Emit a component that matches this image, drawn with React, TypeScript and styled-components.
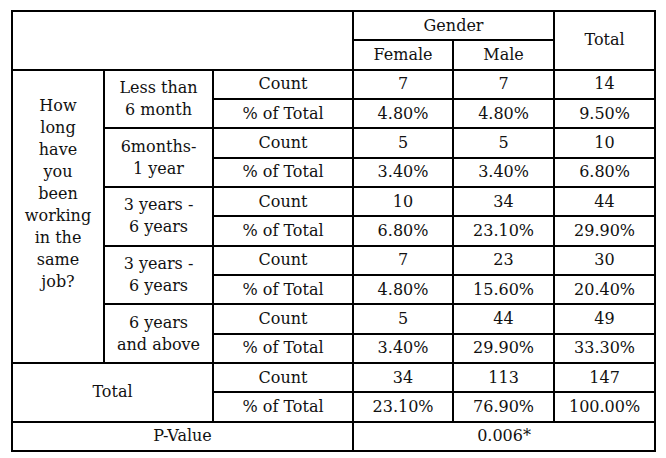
import styled, { createGlobalStyle } from "styled-components";

const GlobalStyle = createGlobalStyle`
  html, body {
    margin: 0;
    padding: 0;
    background: #fff;
  }
  body {
    font-family: "DejaVu Serif", "Liberation Serif", serif;
    color: #111;
  }
`;

const Page = styled.div`
  padding: 10px 0 0 11px;
  width: 666px;
  height: 458px;
  box-sizing: border-box;
`;

const Table = styled.table`
  border-collapse: collapse;
  table-layout: fixed;
  width: 643px;
  font-size: 16px;
  line-height: 22px;
`;

const Row = styled.tr`
  height: 29.33px;
`;

const Cell = styled.td<{ $align?: "top" | "middle"; $pad?: number }>`
  border: 2px solid #000;
  padding: ${(p) => (p.$pad != null ? `${p.$pad}px 0 0` : "0")};
  text-align: center;
  vertical-align: ${(p) => p.$align ?? "middle"};
  white-space: nowrap;
`;

type Group = { label: string[]; counts: string[]; pcts: string[] };

const groups: Group[] = [
  { label: ["Less than", "6 month"], counts: ["7", "7", "14"], pcts: ["4.80%", "4.80%", "9.50%"] },
  { label: ["6months-", "1 year"], counts: ["5", "5", "10"], pcts: ["3.40%", "3.40%", "6.80%"] },
  { label: ["3 years -", "6 years"], counts: ["10", "34", "44"], pcts: ["6.80%", "23.10%", "29.90%"] },
  { label: ["3 years -", "6 years"], counts: ["7", "23", "30"], pcts: ["4.80%", "15.60%", "20.40%"] },
  { label: ["6 years", "and above"], counts: ["5", "44", "49"], pcts: ["3.40%", "29.90%", "33.30%"] },
];

const question = ["How", "long", "have", "you", "been", "working", "in the", "same", "job?"];

const Lines = ({ lines }: { lines: string[] }) => (
  <>
    {lines.map((l, i) => (
      <span key={i}>
        {l}
        {i < lines.length - 1 && <br />}
      </span>
    ))}
  </>
);

export default function App() {
  return (
    <>
      <GlobalStyle />
      <Page>
        <Table>
          <colgroup>
            <col style={{ width: 92 }} />
            <col style={{ width: 109 }} />
            <col style={{ width: 140 }} />
            <col style={{ width: 100 }} />
            <col style={{ width: 101 }} />
            <col style={{ width: 101 }} />
          </colgroup>
          <tbody>
            <Row>
              <Cell colSpan={3} rowSpan={2} />
              <Cell colSpan={2}>Gender</Cell>
              <Cell rowSpan={2}>Total</Cell>
            </Row>
            <Row>
              <Cell>Female</Cell>
              <Cell>Male</Cell>
            </Row>
            {groups.map((g, gi) => (
              <>
                <Row key={`c${gi}`}>
                  {gi === 0 && (
                    <Cell rowSpan={10} $align="top" $pad={24}>
                      <Lines lines={question} />
                    </Cell>
                  )}
                  <Cell rowSpan={2}>
                    <Lines lines={g.label} />
                  </Cell>
                  <Cell>Count</Cell>
                  {g.counts.map((v, i) => (
                    <Cell key={i}>{v}</Cell>
                  ))}
                </Row>
                <Row key={`p${gi}`}>
                  <Cell>% of Total</Cell>
                  {g.pcts.map((v, i) => (
                    <Cell key={i}>{v}</Cell>
                  ))}
                </Row>
              </>
            ))}
            <Row>
              <Cell colSpan={2} rowSpan={2}>
                Total
              </Cell>
              <Cell>Count</Cell>
              <Cell>34</Cell>
              <Cell>113</Cell>
              <Cell>147</Cell>
            </Row>
            <Row>
              <Cell>% of Total</Cell>
              <Cell>23.10%</Cell>
              <Cell>76.90%</Cell>
              <Cell>100.00%</Cell>
            </Row>
            <Row>
              <Cell colSpan={3}>P-Value</Cell>
              <Cell colSpan={3}>0.006*</Cell>
            </Row>
          </tbody>
        </Table>
      </Page>
    </>
  );
}
